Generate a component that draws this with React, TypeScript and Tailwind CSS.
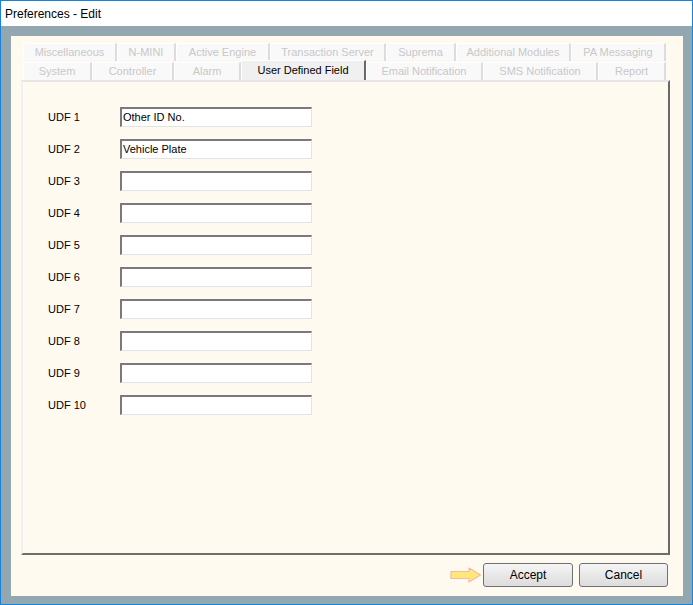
const row1 = [
  { label: 'Miscellaneous', w: 94 },
  { label: 'N-MINI', w: 59 },
  { label: 'Active Engine', w: 94 },
  { label: 'Transaction Server', w: 116 },
  { label: 'Suprema', w: 70 },
  { label: 'Additional Modules', w: 115 },
  { label: 'PA Messaging', w: 95 },
];

const row2 = [
  { label: 'System', w: 69 },
  { label: 'Controller', w: 82 },
  { label: 'Alarm', w: 67 },
  { label: 'User Defined Field', w: 125, active: true },
  { label: 'Email Notification', w: 117 },
  { label: 'SMS Notification', w: 115 },
  { label: 'Report', w: 68 },
];

const fields = [
  'Other ID No.',
  'Vehicle Plate',
  '',
  '',
  '',
  '',
  '',
  '',
  '',
  '',
];

type Tab = { label: string; w: number; active?: boolean };

const TabButton = ({ tab }: { tab: Tab }) => {
  if (tab.active) {
    return (
      <div
        className="-mt-[2px] flex h-[20px] shrink-0 items-center justify-center border-t border-l border-r-2 border-t-white border-l-white border-r-[#696969] bg-[#f0f0f0] text-[11px] text-black"
        style={{ width: tab.w }}
      >
        {tab.label}
      </div>
    );
  }
  return (
    <div
      className="flex h-[18px] shrink-0 items-center justify-center border-t border-l border-r-2 border-t-white border-l-white border-r-[#dcdcdc] bg-[#f9f9f9] text-[11px] text-[#c8c8c8]"
      style={{ width: tab.w }}
    >
      {tab.label}
    </div>
  );
};

export default function App() {
  return (
    <div
      className="flex h-[605px] w-[693px] flex-col border border-[#1883d7] bg-white"
      style={{ fontFamily: '"Liberation Sans", Arial, sans-serif' }}
    >
      {/* Title bar */}
      <div className="flex h-[25px] items-center pl-[4px] text-[12px] text-black">
        Preferences - Edit
      </div>

      {/* Window body */}
      <div className="flex flex-1 flex-col bg-[#93a7b0] pt-[10px] pr-[9px] pb-[8px] pl-[10px]">
        <div className="flex flex-1 flex-col bg-[#fffaf0] pt-[7px] pr-[13px] pb-[9px] pl-[10px]">
          {/* Tabs */}
          <div className="flex flex-col pl-[2px]">
            <div className="flex h-[18px]">
              {row1.map(t => (
                <TabButton key={t.label} tab={t} />
              ))}
            </div>
            <div className="flex h-[19px] items-end pt-px">
              {row2.map(t => (
                <TabButton key={t.label} tab={t} />
              ))}
            </div>
          </div>

          {/* Tab panel */}
          <div className="flex flex-1 flex-col gap-[12px] border-t-2 border-l-2 border-r-2 border-b-2 border-t-[#e6e6e6] border-l-[#f0f0f0] border-r-[#696969] border-b-[#6e6e6e] pt-[25px] pl-[24px]">
            {fields.map((value, i) => (
              <div key={i} className="flex h-[20px] items-center">
                <span className="w-[73px] pl-[1px] text-[11px] text-black">
                  UDF {i + 1}
                </span>
                <div className="flex h-[20px] w-[192px] items-center border-t-2 border-l-2 border-r border-b border-t-[#7a7a7a] border-l-[#7a7a7a] border-r-[#e3e3e3] border-b-[#e3e3e3] bg-white pl-[1px] text-[11px] text-black">
                  {value}
                </div>
              </div>
            ))}
          </div>

          {/* Buttons */}
          <div className="flex items-center justify-end pt-[8px] pr-[2px]">
            <svg width="32" height="16" viewBox="0 0 32 16" className="mr-[1px]">
              <path
                d="M1 4.5 H19 V1 L30.5 8 L19 15 V11.5 H1 Z"
                fill="#ffe77a"
                stroke="#f7b9a6"
                strokeWidth="1.2"
                strokeLinejoin="round"
              />
            </svg>
            <button className="h-[24px] w-[90px] rounded-[3px] border border-[#707070] bg-gradient-to-b from-[#f5f5f5] to-[#dcdcdc] text-[12px] text-black">
              Accept
            </button>
            <button className="ml-[6px] h-[24px] w-[89px] rounded-[3px] border border-[#707070] bg-gradient-to-b from-[#f5f5f5] to-[#dcdcdc] text-[12px] text-black">
              Cancel
            </button>
          </div>
        </div>
      </div>
    </div>
  );
}
